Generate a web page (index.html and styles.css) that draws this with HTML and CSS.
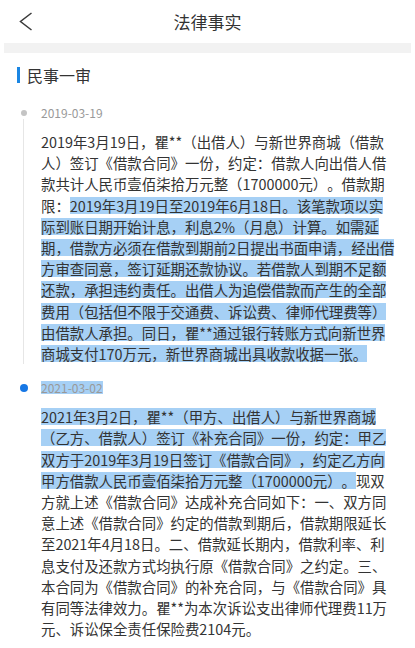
FILE: index.html
```html
<!DOCTYPE html>
<html lang="zh-CN">
<head>
<meta charset="utf-8">
<title>法律事实</title>
<link rel="stylesheet" href="styles.css">
</head>
<body>
<div class="page">
  <header class="topbar">
    <span class="back">
      <svg width="14" height="19" viewBox="0 0 14 19" aria-hidden="true">
        <polyline points="12.5,1 1.5,9.5 12.5,18" fill="none" stroke="#3a3a3a" stroke-width="1.5" stroke-linejoin="miter"/>
      </svg>
    </span>
    <h1 class="title">法律事实</h1>
    <span class="spacer"></span>
  </header>
  <div class="divider"></div>
  <h2 class="section-title">民事一审</h2>
  <ol class="timeline">
    <li class="event">
      <div class="rail"><span class="dot"></span><span class="line"></span></div>
      <div class="content">
        <div class="date">2019-03-19</div>
        <p class="desc">2019年3月19日，瞿**（出借人）与新世界商城（借款人）签订《借款合同》一份，约定：借款人向出借人借款共计人民币壹佰柒拾万元整（1700000元）。借款期限：<span class="sel">2019年3月19日至2019年6月18日。该笔款项以实际到账日期开始计息，利息2%（月息）计算。如需延期，借款方必须在借款到期前2日提出书面申请，经出借方审查同意，签订延期还款协议。若借款人到期不足额还款，承担违约责任。出借人为追偿借款而产生的全部费用（包括但不限于交通费、诉讼费、律师代理费等）由借款人承担。同日，瞿**通过银行转账方式向新世界商城支付170万元，新世界商城出具收款收据一张。</span></p>
      </div>
    </li>
    <li class="event">
      <div class="rail"><span class="dot dot-active"></span></div>
      <div class="content">
        <div class="date"><span class="sel">2021-03-02</span></div>
        <p class="desc"><span class="sel">2021年3月2日，瞿**（甲方、出借人）与新世界商城（乙方、借款人）签订《补充合同》一份，约定：甲乙双方于2019年3月19日签订《借款合同》，约定乙方向甲方借款人民币壹佰柒拾万元整（1700000元）。</span>现双方就上述《借款合同》达成补充合同如下：一、双方同意上述《借款合同》约定的借款到期后，借款期限延长至2021年4月18日。二、借款延长期内，借款利率、利息支付及还款方式均执行原《借款合同》之约定。三、本合同为《借款合同》的补充合同，与《借款合同》具有同等法律效力。瞿**为本次诉讼支出律师代理费11万元、诉讼保全责任保险费2104元。</p>
      </div>
    </li>
  </ol>
</div>
</body>
</html>
```

FILE: styles.css
```css
html, body {
  margin: 0;
  padding: 0;
  background: #ffffff;
}

body {
  font-family: "Noto Sans CJK SC", "Noto Sans", sans-serif;
  color: #333333;
  text-spacing-trim: space-all;
}

.page {
  width: 415px;
}

.topbar {
  display: grid;
  grid-template-columns: 1fr auto 1fr;
  align-items: center;
  height: 43px;
}

.back {
  display: flex;
  align-items: center;
  padding-left: 19px;
}

.back svg {
  display: block;
}

.title {
  margin: 0;
  font-size: 17px;
  font-weight: normal;
  line-height: 24px;
  color: #333333;
}

.divider {
  height: 10px;
  margin: 0 4px;
  background: #f2f2f2;
}

.section-title {
  display: flex;
  align-items: center;
  margin: 11px 0 0;
  padding-left: 17px;
  font-size: 16px;
  font-weight: normal;
  line-height: 22px;
  color: #333333;
}

.section-title::before {
  content: "";
  width: 3px;
  height: 16px;
  margin-right: 7px;
  background: #1b86e3;
}

.timeline {
  list-style: none;
  margin: 18px 0 0;
  padding: 0 18px 0 14px;
}

.event {
  display: flex;
  padding-bottom: 15px;
}

.event:last-child {
  padding-bottom: 0;
}

.rail {
  flex: none;
  width: 19px;
  margin-right: 8px;
  display: flex;
  flex-direction: column;
  align-items: center;
}

.dot {
  flex: none;
  width: 6px;
  height: 6px;
  margin-top: 6px;
  border-radius: 50%;
  background: #c4c4c4;
}

.dot-active {
  width: 8px;
  height: 8px;
  margin-top: 5px;
  background: #1677e5;
}

.line {
  flex: 1;
  width: 1px;
  margin-top: 3px;
  background: #e6e6e6;
}

.content {
  flex: 1;
  min-width: 0;
}

.date {
  font-size: 12px;
  line-height: 18px;
  color: #999999;
  margin-bottom: 9px;
}

.desc {
  margin: 0;
  font-size: 14.4px;
  line-height: 21.2px;
  color: #333333;
}

.sel {
  -webkit-box-decoration-break: clone;
  box-decoration-break: clone;
  background-image: linear-gradient(to bottom,
    transparent 0.15em,
    #a6d0f5 0.15em,
    #a6d0f5 calc(100% - 0.15em),
    transparent calc(100% - 0.15em));
}
```
